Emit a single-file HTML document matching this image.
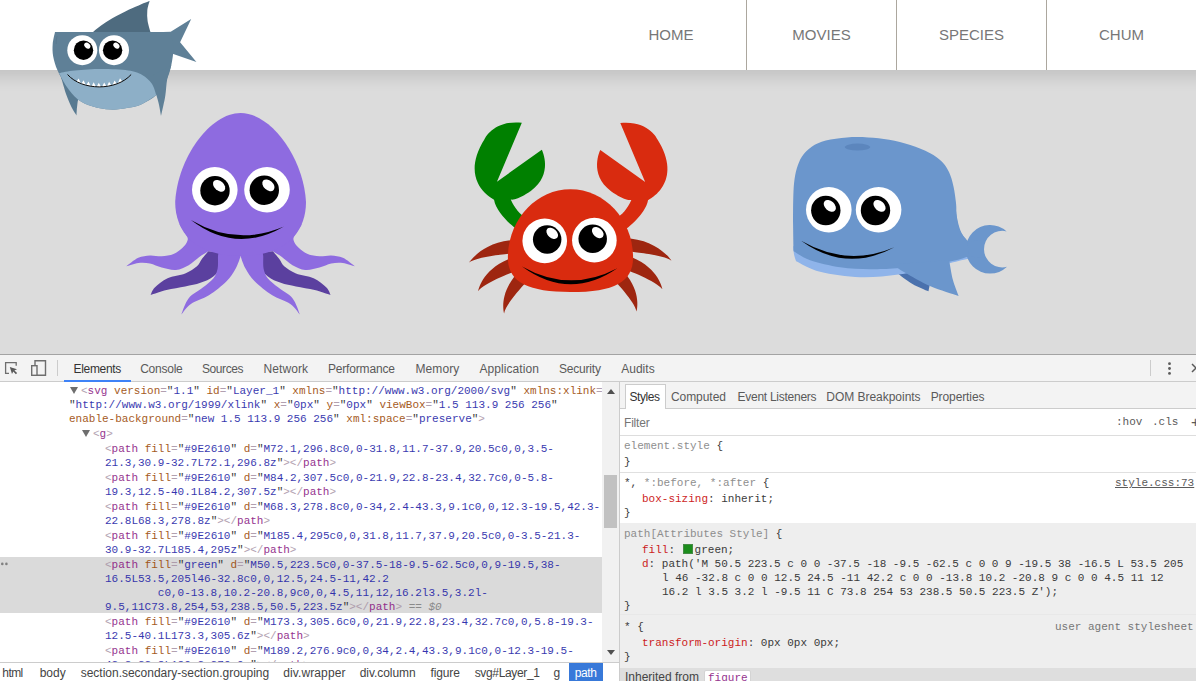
<!DOCTYPE html>
<html><head><meta charset="utf-8"><title>Sea creatures</title>
<style>
html,body{margin:0;padding:0}
body{width:1196px;height:681px;overflow:hidden;position:relative;background:#dcdcdc;font-family:"Liberation Sans",sans-serif}
#page{position:absolute;left:0;top:0;width:1196px;height:354px;overflow:hidden;background:#dcdcdc}
#hdr{position:absolute;left:-40px;top:0;width:1276px;height:70px;background:#fff;box-shadow:0 8px 14px rgba(0,0,0,.115)}
#nav{position:absolute;left:40px;top:0}
#nav a{position:absolute;top:0;height:70px;width:150px;box-sizing:border-box;border-left:1px solid #aca79e;text-align:center;line-height:69px;font-size:15px;color:#777;text-decoration:none}
#nav a:first-child{border-left:none}
.cr{position:absolute}
#dt{position:absolute;left:0;top:354px;width:1196px;height:327px;background:#fff;border-top:1px solid #a3a3a3;box-sizing:border-box;overflow:hidden}
#tb{position:absolute;left:0;top:0;width:1196px;height:26px;background:#f3f3f3;border-bottom:1px solid #ccc}
#tb span{position:absolute;top:1px;line-height:26px;font-size:12px;color:#5a5a5a;white-space:nowrap}
#tb span.sel{color:#333}
#tb .ul{position:absolute;left:64px;top:25px;width:67px;height:2px;background:#3e82f7}
#tb .dv{position:absolute;top:5px;width:1px;height:16px;background:#ccc}
#tb svg{position:absolute}
#el{position:absolute;left:0;top:27px;width:602px;height:280px;overflow:hidden;background:#fff;font-family:"Liberation Mono",monospace;font-size:11px;color:#222}
#el .ln{position:absolute;height:14px;line-height:16px;white-space:pre;opacity:.88}
#selbg{position:absolute;left:0;top:175px;width:602px;height:56px;background:#dadada}
.b{color:#a894a6}.t{color:#881280}.an{color:#994500}.av{color:#1a1aa6}.q{color:#222}.eq{color:#808080;font-style:italic}
.arr{position:absolute}
#dots{position:absolute;left:2px;top:176px;font-size:7px;line-height:14px;color:#8a8a8a;font-family:"Liberation Sans",sans-serif;letter-spacing:0}
#sb{position:absolute;left:602px;top:27px;width:17px;height:280px;background:#f1f1f1}
#sb .th{position:absolute;left:2px;top:93px;width:13px;height:53px;background:#c1c1c1}
#sb svg{position:absolute;left:5px}
#vdiv{position:absolute;left:619px;top:27px;width:1px;height:300px;background:#ccc}
#bc{position:absolute;left:0;top:307px;width:619px;height:19px;background:#fff;border-top:1px solid #ccc;box-sizing:content-box}
#bc span{position:absolute;top:0;height:19px;line-height:21px;font-size:12px;color:#444;white-space:nowrap}
#bc span.on{background:#3879d9;color:#fff;padding:0 6px;margin-left:-6px}
#st{position:absolute;left:620px;top:27px;width:576px;height:300px;background:#fff;overflow:hidden}
#stabs{position:absolute;left:0;top:0;width:576px;height:26px;background:#f3f3f3;border-bottom:1px solid #ccc}
#stabs span{position:absolute;top:3px;line-height:25px;font-size:12px;color:#5a5a5a;white-space:nowrap}
#stabs .on{left:5px;top:2px;width:39px;height:25px;background:#fff;border:1px solid #ccc;border-bottom:none;box-sizing:content-box;position:absolute}
#flt{position:absolute;left:0;top:27px;width:576px;height:26px;border-bottom:1px solid #ddd;background:#fff}
#flt span{position:absolute;line-height:26px;white-space:nowrap}
.m{font-family:"Liberation Mono",monospace;font-size:11px;color:#222;white-space:pre;position:absolute;line-height:16px;height:14px;opacity:.88}
.pn{color:#c80000}.dim{color:#808080}
.sep{position:absolute;left:0;width:576px;height:1px;background:#e0e0e0}
</style></head><body>
<div id="page">
<svg class="cr" style="left:0;top:0" width="1196" height="354" viewBox="0 0 1196 354">
<g transform="translate(444.80,-18.20) scale(0.9750)"><path fill="#9E2610" d="M72.1,296.8c0,0-31.8,11.7-37.9,20.5c0,0,3.5-21.3,30.9-32.7L72.1,296.8z"/><path fill="#9E2610" d="M84.2,307.5c0,0-21.9,22.8-23.4,32.7c0,0-5.8-19.3,12.5-40.1L84.2,307.5z"/><path fill="#9E2610" d="M68.3,278.8c0,0-34,2.4-43.3,9.1c0,0,12.3-19.5,42.3-22.8L68.3,278.8z"/><path fill="#9E2610" d="M185.4,295c0,0,31.8,11.7,37.9,20.5c0,0-3.5-21.3-30.9-32.7L185.4,295z"/><path fill="#9E2610" d="M173.3,305.6c0,0,21.9,22.8,23.4,32.7c0,0,5.8-19.3-12.5-40.1L173.3,305.6z"/><path fill="#9E2610" d="M189.2,276.9c0,0,34,2.4,43.3,9.1c0,0-12.3-19.5-42.3-22.8L189.2,276.9z"/><path fill="green" d="M50.5,223.5c0,0-37.5-18-9.5-62.5c0,0,9-19.5,38-16.5L53.5,205l46-32.8c0,0,12.5,24.5-11,42.2c0,0-13.8,10.2-20.8,9c0,0,4.5,11,12,16.2l3.5,3.2l-9.5,11C73.8,254,53,238.5,50.5,223.5z"/><path fill="#D92B0F" transform="translate(259,0.4) scale(-1,1)" d="M50.5,223.5c0,0-37.5-18-9.5-62.5c0,0,9-19.5,38-16.5L53.5,205l46-32.8c0,0,12.5,24.5-11,42.2c0,0-13.8,10.2-20.8,9c0,0,4.5,11,12,16.2l3.5,3.2l-9.5,11C73.8,254,53,238.5,50.5,223.5z"/><path fill="#D92B0F" d="M64.7,282.9C64.7,244.3 93.4,212.8 128.9,212.8C164.4,212.8 193.1,244.3 193.1,282.9C193.1,307.6 173.8,318.2 128.9,318.2C84,318.2 64.7,307.6 64.7,282.9z"/><circle cx="102.5" cy="265.7" r="22.9" fill="#fff"/><circle cx="153.4" cy="265.0" r="22.9" fill="#fff"/><circle cx="105.0" cy="264.3" r="14.6" fill="#000"/><ellipse cx="110.2" cy="258.0" rx="6.9" ry="4.7" fill="#fff" transform="rotate(42 110.2 258.0)"/><circle cx="151.7" cy="263.5" r="14.6" fill="#000"/><ellipse cx="156.9" cy="257.2" rx="6.9" ry="4.7" fill="#fff" transform="rotate(42 156.9 257.2)"/><path fill="#000" d="M79.2,291.9Q128,319.5 176.9,293.7Q128,327.5 79.2,291.9z"/></g>
<path fill="#5B409F" d="M208.3,251.3C207.2,252.6 203.6,256.8 201.7,259.3C199.9,261.8 199.7,263.9 197.0,266.3C194.2,268.7 190.1,271.5 185.2,273.5C180.3,275.5 172.7,275.9 167.6,278.3C162.5,280.6 157.6,284.8 154.8,287.6C152.0,290.4 151.3,293.8 150.7,295.0C153.3,294.2 160.8,291.4 166.5,290.0C172.3,288.6 179.6,287.7 185.2,286.5C190.9,285.3 195.8,284.5 200.4,282.8C205.1,281.2 209.7,279.5 213.3,276.5C216.8,273.6 220.1,269.3 222.0,265.2C223.8,261.2 223.8,254.3 224.1,252.2z"/><path fill="#5B409F" d="M272.9,251.3C274.0,252.6 277.6,256.8 279.5,259.3C281.3,261.8 281.5,263.9 284.2,266.3C287.0,268.7 291.1,271.5 296.0,273.5C300.9,275.5 308.5,275.9 313.6,278.3C318.7,280.6 323.6,284.8 326.4,287.6C329.2,290.4 329.9,293.8 330.5,295.0C327.9,294.2 320.4,291.4 314.7,290.0C308.9,288.6 301.6,287.7 296.0,286.5C290.3,285.3 285.4,284.5 280.8,282.8C276.1,281.2 271.5,279.5 267.9,276.5C264.4,273.6 261.1,269.3 259.2,265.2C257.4,261.2 257.4,254.3 257.1,252.2z"/><path fill="#8E6BE0" d="M179.1,223.9C180.3,225.7 184.7,232.1 186.1,234.8C187.5,237.5 188.2,238.1 187.6,240.2C187.1,242.4 185.2,245.3 182.8,247.6C180.5,249.9 177.0,252.7 173.5,254.1C170.0,255.6 165.7,256.1 161.7,256.3C157.8,256.5 153.9,255.2 150.0,255.4C146.1,255.7 142.2,256.0 138.3,257.8C134.3,259.6 128.3,264.9 126.3,266.3C128.3,265.8 134.3,263.5 138.3,263.0C142.2,262.6 146.1,262.7 150.0,263.5C153.9,264.2 157.4,266.5 161.7,267.6C166.1,268.7 171.4,270.4 175.9,270.0C180.4,269.6 184.8,267.4 188.7,265.2C192.6,263.0 196.2,259.2 199.3,257.0C202.5,254.7 205.1,253.4 207.6,251.7C210.1,250.0 213.2,247.6 214.3,246.7z"/><path fill="#8E6BE0" d="M302.1,223.9C300.9,225.7 296.5,232.1 295.1,234.8C293.7,237.5 293.0,238.1 293.6,240.2C294.1,242.4 296.0,245.3 298.4,247.6C300.7,249.9 304.2,252.7 307.7,254.1C311.2,255.6 315.5,256.1 319.5,256.3C323.4,256.5 327.3,255.2 331.2,255.4C335.1,255.7 339.0,256.0 342.9,257.8C346.9,259.6 352.9,264.9 354.9,266.3C352.9,265.8 346.9,263.5 342.9,263.0C339.0,262.6 335.1,262.7 331.2,263.5C327.3,264.2 323.8,266.5 319.5,267.6C315.1,268.7 309.8,270.4 305.3,270.0C300.8,269.6 296.4,267.4 292.5,265.2C288.6,263.0 285.0,259.2 281.9,257.0C278.7,254.7 276.1,253.4 273.6,251.7C271.1,250.0 268.0,247.6 266.9,246.7z"/><path fill="#8E6BE0" d="M219.3,250.0C219.1,251.0 218.3,252.8 218.0,255.9C217.8,259.0 218.4,265.0 217.6,268.7C216.8,272.4 215.9,275.1 213.5,278.3C211.0,281.4 207.0,284.3 202.8,287.6C198.7,290.9 192.3,293.8 188.7,298.3C185.1,302.8 182.5,311.8 181.3,314.6C182.9,312.8 186.3,307.1 190.9,303.9C195.5,300.7 203.0,298.9 208.9,295.2C214.8,291.5 221.8,286.0 226.3,281.5C230.8,277.1 233.3,272.6 235.7,268.5C238.0,264.4 239.6,258.9 240.4,257.0C240.4,254.7 243.9,244.6 240.4,243.5C237.0,242.3 223.2,248.9 219.8,250.0z"/><path fill="#8E6BE0" d="M261.9,250.0C262.1,251.0 262.9,252.8 263.2,255.9C263.4,259.0 262.8,265.0 263.6,268.7C264.4,272.4 265.3,275.1 267.7,278.3C270.2,281.4 274.2,284.3 278.4,287.6C282.5,290.9 288.9,293.8 292.5,298.3C296.1,302.8 298.7,311.8 299.9,314.6C298.3,312.8 294.9,307.1 290.3,303.9C285.7,300.7 278.2,298.9 272.3,295.2C266.4,291.5 259.4,286.0 254.9,281.5C250.4,277.1 247.9,272.6 245.5,268.5C243.2,264.4 241.6,258.9 240.8,257.0C240.8,254.7 237.3,244.6 240.8,243.5C244.2,242.3 258.0,248.9 261.4,250.0z"/><path fill="#8E6BE0" d="M240.6,113C210,113 177.5,158 175.2,202C175.2,232 195,256 240.6,256C286,256 306,232 306,202C303.7,158 271.2,113 240.6,113z"/><circle cx="214.8" cy="189.8" r="22.8" fill="#fff"/><circle cx="267.0" cy="189.8" r="22.8" fill="#fff"/><circle cx="215.0" cy="190.7" r="14.7" fill="#000"/><ellipse cx="219.1" cy="185.8" rx="7.0" ry="4.8" fill="#fff" transform="rotate(42 219.1 185.8)"/><circle cx="264.3" cy="190.2" r="14.7" fill="#000"/><ellipse cx="268.4" cy="185.3" rx="7.0" ry="4.8" fill="#fff" transform="rotate(42 268.4 185.3)"/><path fill="#000" d="M190.9,220.0 Q236.5,247.0 283.9,226.5 Q236.0,254.5 190.9,220.0 z"/>
<path fill="#4A71AD" d="M897.4,273.2C899.9,275.0 907.3,280.9 912.5,283.9C917.6,286.9 925.8,290.1 928.5,291.3C928.7,289.8 929.5,286.2 929.7,285.3C928.2,284.3 924.0,281.4 920.5,279.3C916.9,277.2 910.4,273.8 908.4,272.6z"/><path fill="#8FB4EA" d="M793.2,246.2C793.4,247.5 793.6,251.7 794.0,254.2C794.5,256.7 795.7,260.0 796.1,261.2C800.1,263.0 809.4,269.2 820.1,271.8C830.8,274.5 847.2,276.8 860.3,277.3C873.3,277.7 886.7,276.0 898.4,274.5C910.1,272.9 921.8,270.1 930.5,268.2C939.2,266.3 944.1,264.6 950.6,263.0C957.1,261.4 966.5,259.3 969.6,258.6C969.5,257.5 983.5,255.3 968.6,252.2C953.8,249.1 909.6,241.1 880.3,240.1C851.1,239.1 807.8,245.2 793.2,246.2z"/><path fill="#6B96CC" d="M1006.6,231.4 A24.32,24.32 0 1 0 1007,266.8 A18.27,18.27 0 1 1 1006.6,231.4z"/><path fill="#6B96CC" d="M955,200 C957,228 962,236 968.2,241.8 L982,240 L982,258 L968.8,256.2 L948.8,259.8 L940,230z"/><path fill="#6B96CC" d="M793.6,251.2C793.5,246.0 793.1,225.3 793.0,220.1C793.1,216.8 793.0,206.7 793.2,200.4C793.4,194.2 793.5,188.1 794.1,182.8C794.7,177.6 795.4,173.1 796.7,168.7C798.1,164.3 799.5,160.1 802.0,156.4C804.5,152.7 807.7,149.4 811.7,146.7C815.7,144.1 819.9,142.1 825.8,140.6C831.7,139.0 839.9,137.9 846.9,137.4C854.0,136.9 861.0,137.0 868.1,137.4C875.1,137.8 882.1,138.4 889.2,139.7C896.2,140.9 903.6,142.8 910.3,145.0C917.1,147.2 924.4,150.1 929.7,152.9C935.0,155.7 938.8,158.5 942.0,161.7C945.3,164.9 947.2,168.2 949.1,172.3C951.0,176.4 952.3,181.1 953.5,186.4C954.7,191.6 955.6,199.0 956.1,204.0C956.6,208.9 956.0,211.7 956.6,216.1C957.2,220.4 957.8,225.9 959.6,230.1C961.5,234.3 966.3,239.3 967.6,241.1C967.8,243.6 968.5,253.7 968.6,256.2C965.3,257.1 959.9,259.9 948.6,261.8C937.2,263.8 913.5,266.6 900.4,267.8C887.4,269.1 880.3,269.3 870.3,269.2C860.3,269.1 850.2,268.7 840.2,267.2C830.2,265.7 817.9,262.9 810.1,260.2C802.3,257.5 796.4,252.7 793.6,251.2z"/><path fill="#6B96CC" d="M892.4,264.2C894.4,265.6 898.1,268.6 904.4,272.2C910.8,275.9 921.5,282.3 930.5,286.3C939.5,290.2 953.9,294.3 958.6,295.9C957.7,293.3 954.6,286.2 953.0,280.3C951.4,274.3 949.8,263.5 949.2,260.2C939.7,260.9 901.8,263.5 892.4,264.2z"/><ellipse cx="857.5" cy="147.1" rx="12.7" ry="3.5" fill="#5C86BD"/><circle cx="828.8" cy="209.8" r="22.8" fill="#fff"/><circle cx="878.6" cy="209.8" r="22.8" fill="#fff"/><circle cx="825.8" cy="210.5" r="14.7" fill="#000"/><ellipse cx="829.8" cy="205.9" rx="7.0" ry="4.8" fill="#fff" transform="rotate(42 829.8 205.9)"/><circle cx="875.5" cy="210.5" r="14.7" fill="#000"/><ellipse cx="879.5" cy="205.9" rx="7.0" ry="4.8" fill="#fff" transform="rotate(42 879.5 205.9)"/><path fill="#000" d="M801.1,240.7 Q847.2,267.4 894.4,247.2 Q846.2,273.4 801.1,240.7 z"/>
</svg>

<div id="hdr"><div id="nav"><a style="left:596px">HOME</a><a style="left:746px">MOVIES</a><a style="left:896px">SPECIES</a><a style="left:1046px">CHUM</a></div></div>
<svg class="cr" style="left:0;top:0" width="260" height="130" viewBox="0 0 260 130">
<path fill="#587A91" d="M61.1,77.5C62.0,80.5 64.7,90.1 66.4,95.1C68.2,100.1 70.0,104.1 71.7,107.5C73.4,110.8 75.7,114.1 76.5,115.4C76.6,113.8 76.7,108.8 77.2,105.7C77.6,102.6 77.7,99.8 79.1,96.9C80.6,94.0 84.7,89.6 85.8,88.1C81.7,86.3 65.3,79.3 61.1,77.5z"/><path fill="#4E6B7F" d="M92.1,32.6C93.6,31.4 97.8,27.8 101.1,25.4C104.4,23.1 107.9,20.8 111.9,18.5C115.9,16.1 120.8,13.5 125.3,11.4C129.7,9.2 134.6,7.1 138.7,5.4C142.7,3.6 147.8,1.8 149.6,1.1C149.2,2.6 147.6,7.2 147.3,10.6C147.0,13.9 147.1,17.5 147.6,21.1C148.2,24.8 150.1,30.7 150.6,32.6C140.9,32.6 101.9,32.6 92.1,32.6z"/><path fill="#5F8097" d="M163.3,32.1 L170.7,31.7 L191.2,19.0 L180.1,42.3 L196.4,62.0 L170.4,52.9z"/><path fill="#5F8097" d="M170.4,32.1C170.9,34.6 173.2,42.0 173.4,47.6C173.5,53.1 172.5,59.6 171.3,65.2C170.0,70.8 168.5,76.1 166.0,81.0C163.5,86.0 160.2,91.3 156.3,95.1C152.3,99.0 146.9,101.8 142.2,103.9C137.5,106.1 133.4,106.9 128.1,107.8C122.8,108.8 116.3,109.8 110.5,109.6C104.6,109.4 98.3,108.3 92.9,106.6C87.4,104.9 82.3,102.9 77.9,99.5C73.5,96.2 69.8,91.2 66.4,86.3C63.1,81.5 59.8,75.5 57.6,70.5C55.4,65.5 54.0,60.8 53.2,56.4C52.4,52.0 52.4,48.1 52.7,44.0C53.0,40.0 54.6,34.1 55.0,32.1C74.2,32.1 151.1,32.1 170.4,32.1z"/><path fill="#5F8097" d="M171.3,65.2C170.6,67.5 168.2,74.3 167.2,79.3C166.2,84.3 166.1,90.7 165.4,95.1C164.8,99.5 164.1,102.2 163.3,105.7C162.6,109.2 161.4,114.2 161.0,115.9C160.6,113.6 159.5,106.4 158.4,102.2C157.3,98.0 156.6,94.6 154.5,90.7C152.4,86.9 147.2,81.2 145.7,79.3C150.0,76.9 167.0,67.5 171.3,65.2z"/><path fill="#8DAFC7" d="M59.0,73.1C61.7,72.7 68.1,71.1 75.2,70.5C82.3,69.8 92.9,69.1 101.7,69.1C110.5,69.1 121.3,69.5 128.1,70.5C134.8,71.4 138.2,72.7 142.2,74.9C146.1,77.1 149.5,80.3 151.9,83.7C154.2,87.1 155.5,93.2 156.3,95.1C153.9,96.6 146.9,101.8 142.2,103.9C137.5,106.1 133.4,106.9 128.1,107.8C122.8,108.8 116.3,109.8 110.5,109.6C104.6,109.4 98.3,108.3 92.9,106.6C87.4,104.9 82.3,102.9 77.9,99.5C73.5,96.2 69.6,90.7 66.4,86.3C63.3,81.9 60.3,75.3 59.0,73.1z"/><circle cx="82.3" cy="50.2" r="15" fill="#fff"/><circle cx="114.0" cy="50.2" r="15" fill="#fff"/><circle cx="83.5" cy="50.2" r="9.7" fill="#000"/><ellipse cx="87.3" cy="45.6" rx="3.4" ry="2.6" fill="#fff" transform="rotate(42 87.3 45.6)"/><circle cx="112.6" cy="50.2" r="9.7" fill="#000"/><ellipse cx="116.4" cy="45.6" rx="3.4" ry="2.6" fill="#fff" transform="rotate(42 116.4 45.6)"/><path fill="#fff" d="M76.40,81.55 L81.00,83.68 L78.70,78.40 zM81.30,83.79 L85.90,85.26 L83.60,80.29 zM86.20,85.34 L90.80,86.29 L88.50,81.57 zM91.40,86.38 L96.00,86.85 L93.70,82.37 zM96.50,86.88 L101.10,86.92 L98.80,82.65 zM101.90,86.89 L106.50,86.47 L104.20,82.43 zM106.80,86.43 L111.40,85.58 L109.10,81.76 zM112.30,85.36 L116.90,83.94 L114.60,80.41 zM117.70,83.63 L122.30,81.50 L120.00,78.36 z"/><path fill="none" stroke="#0b0b0b" stroke-width="1" stroke-linecap="round" d="M67.8,74.8 C82.0,91.0 116.5,91.0 130.9,74.8"/><path d="M57.1,36.1 Q55.9,40.1 56.2,44.0" stroke="#54748A" stroke-width="0.6" fill="none"/>
</svg>

</div>
<div id="dt">
<div id="tb">
<svg style="left:4px;top:6px" width="16" height="16" viewBox="0 0 16 16"><path d="M12.2 4.8V1.7h-10.6v10.6h3.4" fill="none" stroke="#6e6e6e" stroke-width="1.3"/><path transform="translate(-1.2,-0.4)" d="M7 6.5l2.2 7 1.3-2.6 2.6 2.8 1.2-1.2-2.7-2.7 2.6-1.2z" fill="#5a5a5a"/></svg>
<svg style="left:30px;top:4px" width="18" height="18" viewBox="0 0 18 18"><path d="M5 6V1.7h10.5v14.6H7" fill="none" stroke="#6e6e6e" stroke-width="1.4"/><rect x="1.7" y="6.7" width="5.3" height="9.6" fill="#f3f3f3" stroke="#6e6e6e" stroke-width="1.4"/></svg>
<div class="dv" style="left:57px"></div>
<span class="sel" style="left:73.5px;letter-spacing:-0.32px">Elements</span><span style="left:140.2px;letter-spacing:-0.25px">Console</span><span style="left:201.9px;letter-spacing:-0.40px">Sources</span><span style="left:263.5px;letter-spacing:0.10px">Network</span><span style="left:327.9px;letter-spacing:-0.16px">Performance</span><span style="left:415.5px;letter-spacing:0.09px">Memory</span><span style="left:479.4px;letter-spacing:0.08px">Application</span><span style="left:559.0px;letter-spacing:-0.20px">Security</span><span style="left:621.2px;letter-spacing:0.02px">Audits</span>
<div class="ul"></div>
<div class="dv" style="left:1150px"></div>
<svg style="left:1164px;top:6px" width="10" height="16"><circle cx="5.5" cy="2.7" r="1.4" fill="#5a5a5a"/><circle cx="5.5" cy="7.5" r="1.4" fill="#5a5a5a"/><circle cx="5.5" cy="12.4" r="1.4" fill="#5a5a5a"/></svg>
<svg style="left:1191px;top:8px" width="10" height="10"><path d="M1 1l8 8M9 1l-8 8" stroke="#5a5a5a" stroke-width="1.5"/></svg>
</div>

<div id="el">
<div id="selbg"></div>
<div class="ln " style="top:1px;left:81px"><span class="b">&lt;</span><span class="t">svg</span> <span class="an">version</span><span class="b">=</span><span class="q">"</span><span class="av">1.1</span><span class="q">"</span> <span class="an">id</span><span class="b">=</span><span class="q">"</span><span class="av">Layer_1</span><span class="q">"</span> <span class="an">xmlns</span><span class="b">=</span><span class="q">"</span><span class="av">http://www.w3.org/2000/svg</span><span class="q">"</span> <span class="an">xmlns:xlink</span><span class="b">=</span></div>
<div class="ln " style="top:15px;left:69px"><span class="q">"</span><span class="av">http://www.w3.org/1999/xlink</span><span class="q">"</span> <span class="an">x</span><span class="b">=</span><span class="q">"</span><span class="av">0px</span><span class="q">"</span> <span class="an">y</span><span class="b">=</span><span class="q">"</span><span class="av">0px</span><span class="q">"</span> <span class="an">viewBox</span><span class="b">=</span><span class="q">"</span><span class="av">1.5 113.9 256 256</span><span class="q">"</span></div>
<div class="ln " style="top:29px;left:69px"><span class="an">enable-background</span><span class="b">=</span><span class="q">"</span><span class="av">new 1.5 113.9 256 256</span><span class="q">"</span> <span class="an">xml:space</span><span class="b">=</span><span class="q">"</span><span class="av">preserve</span><span class="q">"</span><span class="b">&gt;</span></div>
<div class="ln " style="top:44px;left:93px"><span class="b">&lt;</span><span class="t">g</span><span class="b">&gt;</span></div>
<div class="ln " style="top:59px;left:105px"><span class="b">&lt;</span><span class="t">path</span> <span class="an">fill</span><span class="b">=</span><span class="q">"</span><span class="av">#9E2610</span><span class="q">"</span> <span class="an">d</span><span class="b">=</span><span class="q">"</span><span class="av">M72.1,296.8c0,0-31.8,11.7-37.9,20.5c0,0,3.5-</span></div>
<div class="ln " style="top:73px;left:105px"><span class="av">21.3,30.9-32.7L72.1,296.8z</span><span class="q">"</span><span class="b">&gt;</span><span class="b">&lt;/</span><span class="t">path</span><span class="b">&gt;</span></div>
<div class="ln " style="top:88px;left:105px"><span class="b">&lt;</span><span class="t">path</span> <span class="an">fill</span><span class="b">=</span><span class="q">"</span><span class="av">#9E2610</span><span class="q">"</span> <span class="an">d</span><span class="b">=</span><span class="q">"</span><span class="av">M84.2,307.5c0,0-21.9,22.8-23.4,32.7c0,0-5.8-</span></div>
<div class="ln " style="top:102px;left:105px"><span class="av">19.3,12.5-40.1L84.2,307.5z</span><span class="q">"</span><span class="b">&gt;</span><span class="b">&lt;/</span><span class="t">path</span><span class="b">&gt;</span></div>
<div class="ln " style="top:117px;left:105px"><span class="b">&lt;</span><span class="t">path</span> <span class="an">fill</span><span class="b">=</span><span class="q">"</span><span class="av">#9E2610</span><span class="q">"</span> <span class="an">d</span><span class="b">=</span><span class="q">"</span><span class="av">M68.3,278.8c0,0-34,2.4-43.3,9.1c0,0,12.3-19.5,42.3-</span></div>
<div class="ln " style="top:131px;left:105px"><span class="av">22.8L68.3,278.8z</span><span class="q">"</span><span class="b">&gt;</span><span class="b">&lt;/</span><span class="t">path</span><span class="b">&gt;</span></div>
<div class="ln " style="top:146px;left:105px"><span class="b">&lt;</span><span class="t">path</span> <span class="an">fill</span><span class="b">=</span><span class="q">"</span><span class="av">#9E2610</span><span class="q">"</span> <span class="an">d</span><span class="b">=</span><span class="q">"</span><span class="av">M185.4,295c0,0,31.8,11.7,37.9,20.5c0,0-3.5-21.3-</span></div>
<div class="ln " style="top:160px;left:105px"><span class="av">30.9-32.7L185.4,295z</span><span class="q">"</span><span class="b">&gt;</span><span class="b">&lt;/</span><span class="t">path</span><span class="b">&gt;</span></div>
<div class="ln " style="top:175px;left:105px"><span class="b">&lt;</span><span class="t">path</span> <span class="an">fill</span><span class="b">=</span><span class="q">"</span><span class="av">green</span><span class="q">"</span> <span class="an">d</span><span class="b">=</span><span class="q">"</span><span class="av">M50.5,223.5c0,0-37.5-18-9.5-62.5c0,0,9-19.5,38-</span></div>
<div class="ln " style="top:189px;left:105px"><span class="av">16.5L53.5,205l46-32.8c0,0,12.5,24.5-11,42.2</span></div>
<div class="ln " style="top:203px;left:105px"><span class="av">        c0,0-13.8,10.2-20.8,9c0,0,4.5,11,12,16.2l3.5,3.2l-</span></div>
<div class="ln " style="top:217px;left:105px"><span class="av">9.5,11C73.8,254,53,238.5,50.5,223.5z</span><span class="q">"</span><span class="b">&gt;</span><span class="b">&lt;/</span><span class="t">path</span><span class="b">&gt;</span><span class="eq"> == $0</span></div>
<div class="ln " style="top:232px;left:105px"><span class="b">&lt;</span><span class="t">path</span> <span class="an">fill</span><span class="b">=</span><span class="q">"</span><span class="av">#9E2610</span><span class="q">"</span> <span class="an">d</span><span class="b">=</span><span class="q">"</span><span class="av">M173.3,305.6c0,0,21.9,22.8,23.4,32.7c0,0,5.8-19.3-</span></div>
<div class="ln " style="top:246px;left:105px"><span class="av">12.5-40.1L173.3,305.6z</span><span class="q">"</span><span class="b">&gt;</span><span class="b">&lt;/</span><span class="t">path</span><span class="b">&gt;</span></div>
<div class="ln " style="top:261px;left:105px"><span class="b">&lt;</span><span class="t">path</span> <span class="an">fill</span><span class="b">=</span><span class="q">"</span><span class="av">#9E2610</span><span class="q">"</span> <span class="an">d</span><span class="b">=</span><span class="q">"</span><span class="av">M189.2,276.9c0,0,34,2.4,43.3,9.1c0,0-12.3-19.5-</span></div>
<div class="ln " style="top:275px;left:105px"><span class="av">42.3-22.8L189.2,276.9z</span><span class="q">"</span><span class="b">&gt;</span><span class="b">&lt;/</span><span class="t">path</span><span class="b">&gt;</span></div>
<svg class="arr" style="left:70px;top:5px" width="8" height="7"><path d="M0 0h8l-4 7z" fill="#6e6e6e"/></svg><svg class="arr" style="left:82px;top:48px" width="8" height="7"><path d="M0 0h8l-4 7z" fill="#6e6e6e"/></svg>
<svg class="arr" style="left:0;top:178px" width="10" height="8"><circle cx="2.3" cy="3.9" r="1.3" fill="#808080"/><circle cx="6.4" cy="3.9" r="1.3" fill="#808080"/></svg>
</div>
<div id="sb"><div class="th"></div><svg style="top:7px" width="8" height="5"><path d="M0 5l4-5 4 5z" fill="#505050"/></svg><svg style="top:268px" width="8" height="5"><path d="M0 0l4 5 4-5z" fill="#505050"/></svg></div>
<div id="vdiv"></div>
<div id="bc"><span style="left:2.3px;letter-spacing:-0.57px">html</span><span style="left:39.7px;letter-spacing:-0.01px">body</span><span style="left:80.7px;letter-spacing:-0.01px">section.secondary-section.grouping</span><span style="left:283.3px;letter-spacing:0.10px">div.wrapper</span><span style="left:359.7px;letter-spacing:-0.05px">div.column</span><span style="left:430.5px;letter-spacing:-0.14px">figure</span><span style="left:474.7px;letter-spacing:-0.34px">svg#Layer_1</span><span style="left:553.4px;letter-spacing:0.00px">g</span><span class="on" style="left:574.7px;letter-spacing:-0.34px">path</span></div>

<div id="st">
<div id="stabs"><div class="on"></div><span style="left:9.5px;letter-spacing:-0.45px;color:#333">Styles</span><span style="left:50.9px;letter-spacing:-0.04px">Computed</span><span style="left:117.5px;letter-spacing:-0.26px">Event Listeners</span><span style="left:206.3px;letter-spacing:-0.03px">DOM Breakpoints</span><span style="left:310.7px;letter-spacing:-0.10px">Properties</span></div>
<div id="flt"><span style="left:4px;top:1px;font-size:12px;letter-spacing:-0.20px;color:#757575">Filter</span><span class="mono" style="left:496px;top:0;color:#5a5a5a;font-family:'Liberation Mono',monospace;font-size:11px">:hov</span><span style="left:532px;top:0;color:#5a5a5a;font-family:'Liberation Mono',monospace;font-size:11px">.cls</span><span style="left:571px;top:0;color:#5a5a5a;font-size:15px">+</span></div>
<div style="position:absolute;left:0;top:141px;width:576px;height:200px;background:#eeeeee"></div>
<div class="sep" style="top:90px"></div>
<div class="sep" style="top:232px;background:#e8e8e8"></div>
<div class="m" style="left:4px;top:56px"><span class="dim">element.style</span> {</div>
<div class="m" style="left:4px;top:72px">}</div>
<div class="m" style="left:4px;top:93px">*, <span class="dim">*:before, *:after</span> {</div>
<div class="m" style="left:495px;top:93px"><span style="text-decoration:underline;color:#444">style.css:73</span></div>
<div class="m" style="left:22px;top:109px"><span class="pn">box-sizing</span>: inherit;</div>
<div class="m" style="left:4px;top:123px">}</div>
<div class="m" style="left:4px;top:144px"><span class="dim">path[Attributes Style]</span> {</div>
<div class="m" style="left:22px;top:160px"><span class="pn">fill</span>: <span style="display:inline-block;width:8px;height:8px;border:1px solid #2e7d2e;background:#008000;vertical-align:-1px;margin:0 2px 0 1px"></span>green;</div>
<div class="m" style="left:22px;top:174px"><span class="pn">d</span>: path('M 50.5 223.5 c 0 0 -37.5 -18 -9.5 -62.5 c 0 0 9 -19.5 38 -16.5 L 53.5 205</div>
<div class="m" style="left:42px;top:188px">l 46 -32.8 c 0 0 12.5 24.5 -11 42.2 c 0 0 -13.8 10.2 -20.8 9 c 0 0 4.5 11 12</div>
<div class="m" style="left:42px;top:202px">16.2 l 3.5 3.2 l -9.5 11 C 73.8 254 53 238.5 50.5 223.5 Z');</div>
<div class="m" style="left:4px;top:216px">}</div>
<div class="m" style="left:4px;top:237px">* {</div>
<div class="m" style="left:435px;top:237px"><span style="color:#666">user agent stylesheet</span></div>
<div class="m" style="left:22px;top:253px"><span class="pn">transform-origin</span>: 0px 0px 0px;</div>
<div class="m" style="left:4px;top:267px">}</div>
<div style="position:absolute;left:0;top:286px;width:576px;height:20px;background:#dedede"></div>
<div style="position:absolute;left:5px;top:287px;font-size:12px;color:#444;line-height:16px;white-space:nowrap">Inherited from</div>
<div style="position:absolute;left:84px;top:288px;width:45px;height:14px;background:#fff;border:1px solid #d4d4d4;border-radius:2px"></div>
<div class="m" style="left:88px;top:288px"><span class="t">figure</span></div>
</div>

</div>
</body></html>
